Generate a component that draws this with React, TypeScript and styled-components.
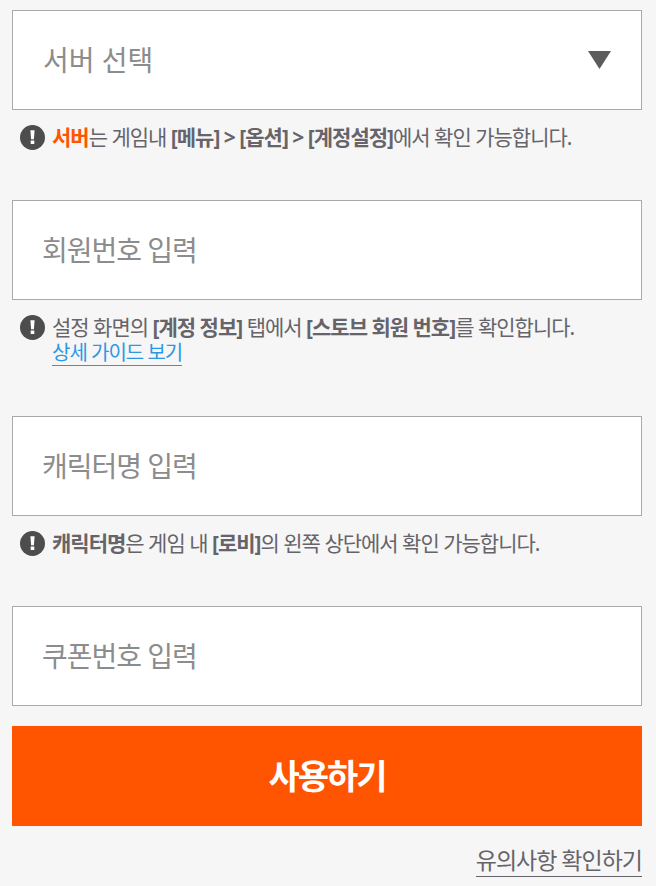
import React, { useState } from "react";
import styled, { createGlobalStyle } from "styled-components";

const GlobalStyle = createGlobalStyle`
  * { box-sizing: border-box; }
  body {
    margin: 0;
    background: #f6f6f6;
    color: #66646a;
    font-family: "Noto Sans", "Noto Sans CJK KR", sans-serif;
  }
  input, select, button { font-family: inherit; }
`;

const Form = styled.form`
  display: flex;
  flex-direction: column;
  padding: 10px 14px 9px 12px;
`;

const Field = styled.div<{ $gap: number }>`
  margin-bottom: ${(p) => p.$gap}px;
`;

const SelectWrap = styled.div`
  display: grid;
  align-items: center;
  > * { grid-area: 1 / 1; }
`;

const Arrow = styled.svg`
  justify-self: end;
  margin-right: 31px;
  pointer-events: none;
`;

const Select = styled.select`
  appearance: none;
  width: 100%;
  height: 100px;
  padding: 0 60px 0 30px;
  border: 1px solid #aaa;
  border-radius: 0;
  background: #fff;
  color: #8c8c8c;
  font-size: 28px;
`;

const Input = styled.input`
  display: block;
  width: 100%;
  height: 100px;
  padding: 0 29px;
  border: 1px solid #aaa;
  border-radius: 0;
  background: #fff;
  color: #66646a;
  font-size: 28px;
  letter-spacing: -1px;
  &::placeholder { color: #8c8c8c; opacity: 1; }
`;

const Note = styled.div`
  display: flex;
  gap: 7px;
  padding: 15px 0 0 8px;
`;

const NoteIcon = styled.svg`
  flex: none;
`;

const NoteText = styled.p`
  margin: 0;
  font-size: 21px;
  line-height: 25px;
  letter-spacing: -1px;
`;

const Bold = styled.strong<{ $accent?: boolean }>`
  font-weight: 700;
  color: ${(p) => (p.$accent ? "#ff5500" : "inherit")};
`;

const GuideLink = styled.a`
  display: table;
  border-bottom: 1px solid #2b98e6;
  color: #2b98e6;
  font-size: 20px;
  text-decoration: none;
`;

const Submit = styled.button`
  height: 100px;
  padding: 0 0 4px;
  border: 0;
  background: #ff5500;
  color: #fff;
  font-size: 34px;
  font-weight: 700;
  letter-spacing: -2px;
`;

const NoticeLink = styled.a`
  align-self: flex-end;
  margin-top: 18px;
  border-bottom: 1px solid #66646a;
  color: #66646a;
  font-size: 23px;
  line-height: 32px;
  letter-spacing: -1px;
  text-decoration: none;
`;

function Alert() {
  return (
    <NoteIcon width="25" height="25" viewBox="0 0 25 25" aria-hidden="true">
      <circle cx="12.5" cy="12.5" r="12.5" fill="#4d4d4d" />
      <path d="M10.4 5.3h4.2l-.7 9h-2.8zM10.7 15.6h3.6v3.5h-3.6z" fill="#fff" />
    </NoteIcon>
  );
}

export default function App() {
  const [server, setServer] = useState("");
  return (
    <>
      <GlobalStyle />
      <Form onSubmit={(e) => e.preventDefault()}>
        <Field $gap={50}>
          <SelectWrap>
            <Select aria-label="서버 선택" value={server} onChange={(e) => setServer(e.target.value)}>
              <option value="">서버 선택</option>
            </Select>
            <Arrow width="23" height="18" viewBox="0 0 23 18" aria-hidden="true">
              <path d="M0 0h23L11.5 18z" fill="#5c5c5c" />
            </Arrow>
          </SelectWrap>
          <Note>
            <Alert />
            <NoteText>
              <Bold $accent>서버</Bold>는 게임내 <Bold>[메뉴] &gt; [옵션] &gt; [계정설정]</Bold>에서 확인 가능합니다.
            </NoteText>
          </Note>
        </Field>
        <Field $gap={50}>
          <Input aria-label="회원번호" placeholder="회원번호 입력" />
          <Note>
            <Alert />
            <NoteText>
              설정 화면의 <Bold>[계정 정보]</Bold> 탭에서 <Bold>[스토브 회원 번호]</Bold>를 확인합니다.
              <GuideLink href="#guide">상세 가이드 보기</GuideLink>
            </NoteText>
          </Note>
        </Field>
        <Field $gap={50}>
          <Input aria-label="캐릭터명" placeholder="캐릭터명 입력" />
          <Note>
            <Alert />
            <NoteText>
              <Bold>캐릭터명</Bold>은 게임 내 <Bold>[로비]</Bold>의 왼쪽 상단에서 확인 가능합니다.
            </NoteText>
          </Note>
        </Field>
        <Field $gap={20}>
          <Input aria-label="쿠폰번호" placeholder="쿠폰번호 입력" />
        </Field>
        <Submit type="submit">사용하기</Submit>
        <NoticeLink href="#notice">유의사항 확인하기</NoticeLink>
      </Form>
    </>
  );
}
